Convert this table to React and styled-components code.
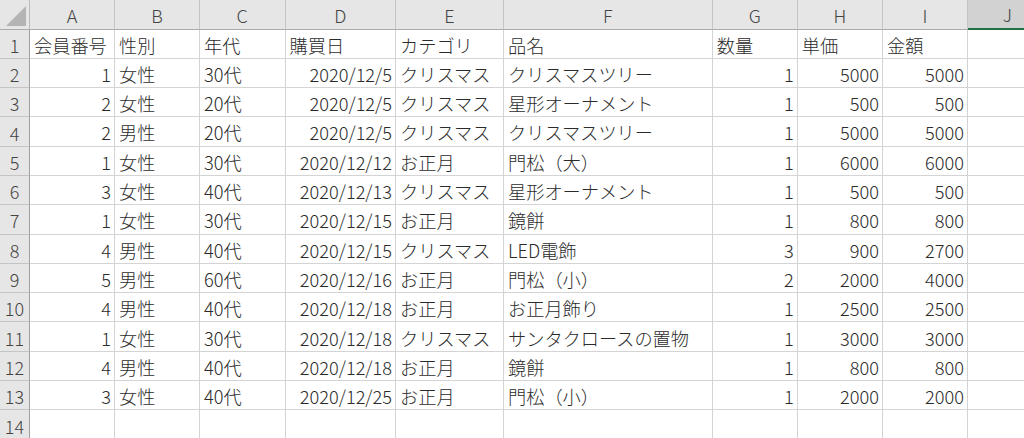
import React from 'react'
import styled, { createGlobalStyle } from 'styled-components'

const GlobalStyle = createGlobalStyle`
  html, body {
    margin: 0;
    padding: 0;
    background: #ffffff;
    overflow: hidden;
  }
  body {
    font-family: "Noto Sans CJK JP", "Noto Sans", sans-serif;
  }
`;

const columns = ['A','B','C','D','E','F','G','H','I','J'];

// 左寄せ = l, 右寄せ = r
const aligns = ['r','l','l','r','l','l','r','r','r','l'];

const rows = [
  ['会員番号','性別','年代','購買日','カテゴリ','品名','数量','単価','金額'],
  ['1','女性','30代','2020/12/5','クリスマス','クリスマスツリー','1','5000','5000'],
  ['2','女性','20代','2020/12/5','クリスマス','星形オーナメント','1','500','500'],
  ['2','男性','20代','2020/12/5','クリスマス','クリスマスツリー','1','5000','5000'],
  ['1','女性','30代','2020/12/12','お正月','門松（大）','1','6000','6000'],
  ['3','女性','40代','2020/12/13','クリスマス','星形オーナメント','1','500','500'],
  ['1','女性','30代','2020/12/15','お正月','鏡餅','1','800','800'],
  ['4','男性','40代','2020/12/15','クリスマス','LED電飾','3','900','2700'],
  ['5','男性','60代','2020/12/16','お正月','門松（小）','2','2000','4000'],
  ['4','男性','40代','2020/12/18','お正月','お正月飾り','1','2500','2500'],
  ['1','女性','30代','2020/12/18','クリスマス','サンタクロースの置物','1','3000','3000'],
  ['4','男性','40代','2020/12/18','お正月','鏡餅','1','800','800'],
  ['3','女性','40代','2020/12/25','お正月','門松（小）','1','2000','2000'],
  [],
];

const App = () => {
  return (
    <>
      <GlobalStyle />
      <Sheet>
        <Corner>
          <CornerMark />
        </Corner>
        {columns.map((c) => (
          <ColHeader key={c} selected={c === 'J'}>{c}</ColHeader>
        ))}

        {rows.map((row, r) => (
          <React.Fragment key={r}>
            <RowHeader>{r + 1}</RowHeader>
            {columns.map((c, i) => {
              const v = row[i] || '';
              // 見出し行は全部左寄せ
              const align = r === 0 ? 'l' : aligns[i];
              return (
                <Cell key={c} align={align}>{v}</Cell>
              )
            })}
          </React.Fragment>
        ))}
      </Sheet>
    </>
  )
}

export default App


const Sheet = styled.div`
  display: grid;
  grid-template-columns: 30px 85px 85px 85.5px 110.5px 108px 208.7px 85px 85.3px 85px 80px;
  grid-template-rows: 29.5px;
  grid-auto-rows: 29.3px;
  width: 1024px;
  height: 438px;
  overflow: hidden;
  font-size: 18.2px;
  font-weight: 300;
  color: #2b2b2b;
`;

const HeaderBase = styled.div`
  box-sizing: border-box;
  background: #e6e6e6;
  color: #444444;
  display: flex;
  align-items: center;
  justify-content: center;
  white-space: nowrap;
  font-size: 18px;
  line-height: 1;
`;

const Corner = styled(HeaderBase)`
  position: relative;
  border-right: 1px solid #bcbcbc;
  border-bottom: 1px solid #ababab;
`;

const CornerMark = styled.div`
  position: absolute;
  right: 3px;
  bottom: 3px;
  width: 0;
  height: 0;
  border-left: 20px solid transparent;
  border-bottom: 20px solid #b4b4b4;
`;

const ColHeader = styled(HeaderBase)`
  background: ${props => props.selected ? '#d2d2d2' : '#e6e6e6'};
  border-right: 1px solid #c4c4c4;
  border-bottom: ${props => props.selected ? '2px solid #217346' : '1px solid #ababab'};
  padding-top: 1px;
`;

const RowHeader = styled(HeaderBase)`
  border-right: 1px solid #9e9e9e;
  border-bottom: 1px solid #c4c4c4;
  padding-top: 2px;
`;

const Cell = styled.div`
  box-sizing: border-box;
  border-right: 1px solid #d4d4d4;
  border-bottom: 1px solid #d4d4d4;
  display: flex;
  align-items: center;
  justify-content: ${props => props.align === 'r' ? 'flex-end' : 'flex-start'};
  padding: 2px 3px 0 4px;
  white-space: nowrap;
  overflow: visible;
  line-height: 1;
`;
